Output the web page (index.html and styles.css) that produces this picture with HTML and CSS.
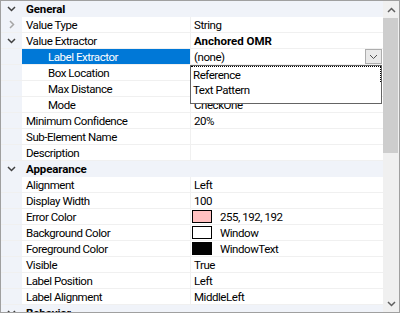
FILE: index.html
```html
<!DOCTYPE html>
<html lang="en">
<head>
  <meta charset="UTF-8" />
  <title>Properties</title>
  <link rel="stylesheet" href="styles.css">
</head>
<body>
  <div class="grid">
    <div class="rows">
      <div class="cat">
        <span class="gut"><svg width="9" height="6" viewBox="0 0 9 6"><path d="M1 1l3.5 3.5L8 1" fill="none" stroke="#404040" stroke-width="1.5"/></svg></span>
        <span class="name">General</span>
      </div>
      <div class="row">
        <span class="gut"><svg width="6" height="9" viewBox="0 0 6 9"><path d="M1 1l3.5 3.5L1 8" fill="none" stroke="#a6a6a6" stroke-width="1.5"/></svg></span>
        <span class="label">Value Type</span><span class="value">String</span>
      </div>
      <div class="row">
        <span class="gut"><svg width="9" height="6" viewBox="0 0 9 6"><path d="M1 1l3.5 3.5L8 1" fill="none" stroke="#404040" stroke-width="1.5"/></svg></span>
        <span class="label">Value Extractor</span><span class="value bold">Anchored OMR</span>
      </div>
      <div class="row">
        <span class="gut"></span>
        <span class="label child selected">Label Extractor</span>
        <span class="value">(none)
          <span class="drop-btn"><svg width="9" height="6" viewBox="0 0 9 6"><path d="M1 1l3.5 3.5L8 1" fill="none" stroke="#505050" stroke-width="1"/></svg></span>
        </span>
      </div>
      <div class="row"><span class="gut"></span><span class="label child">Box Location</span><span class="value"></span></div>
      <div class="row"><span class="gut"></span><span class="label child">Max Distance</span><span class="value"></span></div>
      <div class="row"><span class="gut"></span><span class="label child">Mode</span><span class="value">CheckOne</span></div>
      <div class="row"><span class="gut"></span><span class="label">Minimum Confidence</span><span class="value">20%</span></div>
      <div class="row"><span class="gut"></span><span class="label">Sub-Element Name</span><span class="value"></span></div>
      <div class="row"><span class="gut"></span><span class="label">Description</span><span class="value"></span></div>
      <div class="cat">
        <span class="gut"><svg width="9" height="6" viewBox="0 0 9 6"><path d="M1 1l3.5 3.5L8 1" fill="none" stroke="#404040" stroke-width="1.5"/></svg></span>
        <span class="name">Appearance</span>
      </div>
      <div class="row"><span class="gut"></span><span class="label">Alignment</span><span class="value">Left</span></div>
      <div class="row"><span class="gut"></span><span class="label">Display Width</span><span class="value">100</span></div>
      <div class="row"><span class="gut"></span><span class="label">Error Color</span><span class="value"><span class="swatch pink"></span>255, 192, 192</span></div>
      <div class="row"><span class="gut"></span><span class="label">Background Color</span><span class="value"><span class="swatch white"></span>Window</span></div>
      <div class="row"><span class="gut"></span><span class="label">Foreground Color</span><span class="value"><span class="swatch black"></span>WindowText</span></div>
      <div class="row"><span class="gut"></span><span class="label">Visible</span><span class="value">True</span></div>
      <div class="row"><span class="gut"></span><span class="label">Label Position</span><span class="value">Left</span></div>
      <div class="row"><span class="gut"></span><span class="label">Label Alignment</span><span class="value">MiddleLeft</span></div>
      <div class="cat">
        <span class="gut"><svg width="9" height="6" viewBox="0 0 9 6"><path d="M1 1l3.5 3.5L8 1" fill="none" stroke="#404040" stroke-width="1.5"/></svg></span>
        <span class="name">Behavior</span>
      </div>
    </div>

    <div class="scrollbar">
      <div class="arrow"><svg width="9" height="6" viewBox="0 0 9 6"><path d="M1 5l3.5-3.5L8 5" fill="none" stroke="#606060" stroke-width="1.5"/></svg></div>
      <div class="track"><div class="thumb"></div></div>
      <div class="arrow"><svg width="9" height="6" viewBox="0 0 9 6"><path d="M1 1l3.5 3.5L8 1" fill="none" stroke="#606060" stroke-width="1.5"/></svg></div>
    </div>

    <div class="dropdown">
      <div class="item focused">Reference</div>
      <div class="item">Text Pattern</div>
    </div>
  </div>
</body>
</html>
```

FILE: styles.css
```css
body {
  margin: 0;
  font-family: Roboto, "Liberation Sans", sans-serif;
  font-size: 11.5px;
  letter-spacing: -0.45px;
  color: #000;
  background: #fff;
}
.grid {
  position: relative;
  width: 400px;
  height: 313px;
  box-sizing: border-box;
  border: 1px solid #a0a0a0;
  display: flex;
  overflow: hidden;
}
.rows {
  width: 382px;
  flex: none;
}
.row, .cat {
  display: flex;
  height: 16px;
  box-sizing: border-box;
  line-height: 16px;
}
.row {
  border-bottom: 1px solid #f0f0f0;
}
.cat {
  background: #f0f3f9;
}
.gut {
  width: 21px;
  flex: none;
  background: #f0f3f9;
  display: flex;
  align-items: center;
  justify-content: center;
}
.cat .name {
  padding-left: 4px;
  font-weight: bold;
  letter-spacing: -0.1px;
}
.label {
  width: 164px;
  flex: none;
  padding-left: 4px;
  border-right: 1px solid #f0f0f0;
  white-space: nowrap;
  overflow: hidden;
}
.label.child {
  width: 142px;
  padding-left: 26px;
}
.label.selected {
  background: #0078d7;
  color: #fff;
}
.value {
  flex: 1;
  display: flex;
  align-items: center;
  padding-left: 3px;
  white-space: nowrap;
}
.bold {
  font-weight: bold;
  letter-spacing: 0;
}
.drop-btn {
  margin-left: auto;
  margin-right: 1px;
  width: 15px;
  height: 13px;
  border: 1px solid #adadad;
  background: #e9e9e9;
  display: flex;
  align-items: center;
  justify-content: center;
}
.swatch {
  width: 18px;
  height: 11px;
  border: 1px solid #000;
  margin: 0 8px 0 -2px;
}
.swatch.pink {
  background: #ffc0c0;
}
.swatch.white {
  background: #fff;
}
.swatch.black {
  background: #000;
}
.scrollbar {
  width: 16px;
  flex: none;
  display: flex;
  flex-direction: column;
  background: #f0f0f0;
}
.arrow {
  height: 17px;
  display: flex;
  align-items: center;
  justify-content: center;
}
.track {
  flex: 1;
}
.thumb {
  width: 15px;
  height: 135px;
  background: #cdcdcd;
}
.dropdown {
  position: absolute;
  left: 189px;
  top: 64px;
  width: 192px;
  height: 39px;
  box-sizing: border-box;
  border: 1px solid #646464;
  background: #fff;
}
.item {
  height: 16px;
  line-height: 16px;
  padding-left: 2px;
  box-sizing: border-box;
}
.item.focused {
  border-top: 1px dotted #000;
  border-right: 1px dotted #000;
}
```
